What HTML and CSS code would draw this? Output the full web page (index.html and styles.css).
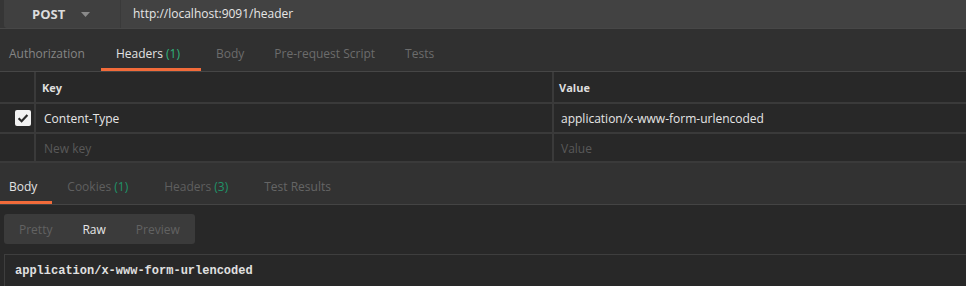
FILE: index.html
```html
<!DOCTYPE html>
<html>
<head>
<meta charset="utf-8">
<link rel="stylesheet" href="styles.css">
</head>
<body>
<div class="topbar">
  <div class="method">
    <span class="method-name">POST</span>
    <svg class="caret" width="9" height="5" viewBox="0 0 9 5"><path d="M0 0h9L4.5 5z" fill="#8a8a8a"/></svg>
  </div>
  <div class="url">http://localhost:9091/header</div>
</div>

<div class="tabs req-tabs">
  <div class="tab tab-light">Authorization</div>
  <div class="tab active has-count">Headers <span class="count">(1)</span></div>
  <div class="tab">Body</div>
  <div class="tab">Pre-request Script</div>
  <div class="tab">Tests</div>
</div>

<div class="table">
  <div class="row head">
    <div class="cell c-check"></div>
    <div class="cell c-key">Key</div>
    <div class="cell c-val">Value</div>
  </div>
  <div class="row r1">
    <div class="cell c-check">
      <span class="checkbox">
        <svg width="16" height="16" viewBox="0 0 16 16"><path d="M3.6 8.2l3 3 5.8-6.2" fill="none" stroke="#2a2a2a" stroke-width="2.2"/></svg>
      </span>
    </div>
    <div class="cell c-key">Content-Type</div>
    <div class="cell c-val">application/x-www-form-urlencoded</div>
  </div>
  <div class="row r2">
    <div class="cell c-check"></div>
    <div class="cell c-key placeholder">New key</div>
    <div class="cell c-val placeholder">Value</div>
  </div>
</div>

<div class="tabs res-tabs">
  <div class="tab active first">Body</div>
  <div class="tab has-count">Cookies <span class="count dim">(1)</span></div>
  <div class="tab has-count">Headers <span class="count dim">(3)</span></div>
  <div class="tab">Test Results</div>
</div>

<div class="response">
  <div class="toggle">
    <span class="opt">Pretty</span>
    <span class="opt on">Raw</span>
    <span class="opt">Preview</span>
  </div>
  <div class="raw">application/x-www-form-urlencoded</div>
</div>
</body>
</html>
```

FILE: styles.css
```css
html, body {
  margin: 0;
  padding: 0;
  background: #282828;
  font-family: "Open Sans", "Liberation Sans", sans-serif;
  font-size: 12px;
  overflow: hidden;
}

.topbar {
  height: 28px;
  display: flex;
  background: #363636;
  padding-left: 4px;
  border-bottom: 1px solid #474747;
  box-sizing: content-box;
}

.method {
  width: 116px;
  background: #404040;
  border-bottom-left-radius: 3px;
  display: flex;
  align-items: center;
  padding-left: 28px;
  box-sizing: border-box;
}

.method-name {
  color: #dcdcdc;
  font-weight: 700;
  font-size: 13px;
}

.caret {
  margin-left: 16px;
  margin-top: 1px;
}

.url {
  flex: 1;
  background: #424242;
  border-left: 1px solid #3a3a3a;
  color: #e6e6e6;
  display: flex;
  align-items: center;
  padding-left: 12px;
  padding-bottom: 2px;
}

.tabs {
  display: flex;
  background: #303030;
  border-bottom: 1px solid #464646;
}

.req-tabs {
  height: 42px;
}

.tab {
  display: flex;
  align-items: center;
  padding: 9px 15px 0;
  color: #6c6c6c;
  border-bottom: 3px solid transparent;
  white-space: pre;
}

.tab.has-count {
  padding-right: 21px;
}

.req-tabs .tab:first-child {
  padding-left: 9px;
  padding-right: 16px;
}

.tab-light {
  color: #858585;
}

.tab.active {
  color: #e2e2e2;
  border-bottom-color: #f26b3a;
}

.count {
  color: #2fb47c;
}

.count.dim {
  color: #1f9469;
}

.table .row {
  display: flex;
  border-bottom: 2px solid #3a3a3a;
}

.row.head { height: 30px; }
.row.r1 { height: 28px; }
.row.r2 { height: 27px; }

.cell {
  display: flex;
  align-items: center;
  color: #e6e6e6;
  box-sizing: border-box;
}

.c-check {
  width: 36px;
  border-right: 2px solid #3a3a3a;
  justify-content: flex-end;
  padding-right: 3px;
  flex: none;
}

.c-key {
  width: 518px;
  border-right: 2px solid #3a3a3a;
  padding-left: 8px;
  flex: none;
}

.c-val {
  flex: 1;
  padding-left: 7px;
}

.head .cell {
  font-size: 11px;
  font-weight: 700;
  color: #dedede;
  padding-top: 1px;
}

.head .c-key { padding-left: 6px; }
.head .c-val { padding-left: 5px; }

.r1 .c-key { padding-top: 1px; }
.r1 .c-val { padding-top: 1px; }

.placeholder {
  color: #595959;
  padding-top: 1px;
}

.checkbox {
  width: 16px;
  height: 16px;
  background: #f2f2f2;
  border-radius: 2px;
  display: block;
}

.checkbox svg { display: block; }

.res-tabs {
  height: 41px;
  background: #323232;
  border-bottom: 1px solid #444;
}

.res-tabs .tab {
  padding-top: 8px;
  color: #5f5f5f;
}

.res-tabs .tab.has-count {
  padding-right: 21px;
}

.res-tabs .tab.first {
  padding-left: 9px;
  padding-right: 15px;
  color: #e2e2e2;
}

.res-tabs .tab:nth-child(4) {
  color: #656565;
}

.response {
  padding-top: 9px;
}

.toggle {
  margin-left: 4px;
  width: 191px;
  height: 30px;
  background: #3b3b3b;
  border-radius: 3px;
  display: flex;
  align-items: center;
  box-sizing: border-box;
  padding-left: 15px;
}

.opt {
  color: #626262;
}

.opt:nth-child(1) { margin-right: 30px; }
.opt:nth-child(2) { margin-right: 30px; }

.opt.on {
  color: #e6e6e6;
}

.raw {
  margin-top: 10px;
  margin-left: 4px;
  border-top: 1px solid #3e3e3e;
  border-left: 1px solid #3e3e3e;
  height: 40px;
  padding: 9px 0 0 10px;
  box-sizing: border-box;
  font-family: "Liberation Mono", "DejaVu Sans Mono", monospace;
  font-size: 12px;
  font-weight: 700;
  color: #e0e0e0;
}
```
